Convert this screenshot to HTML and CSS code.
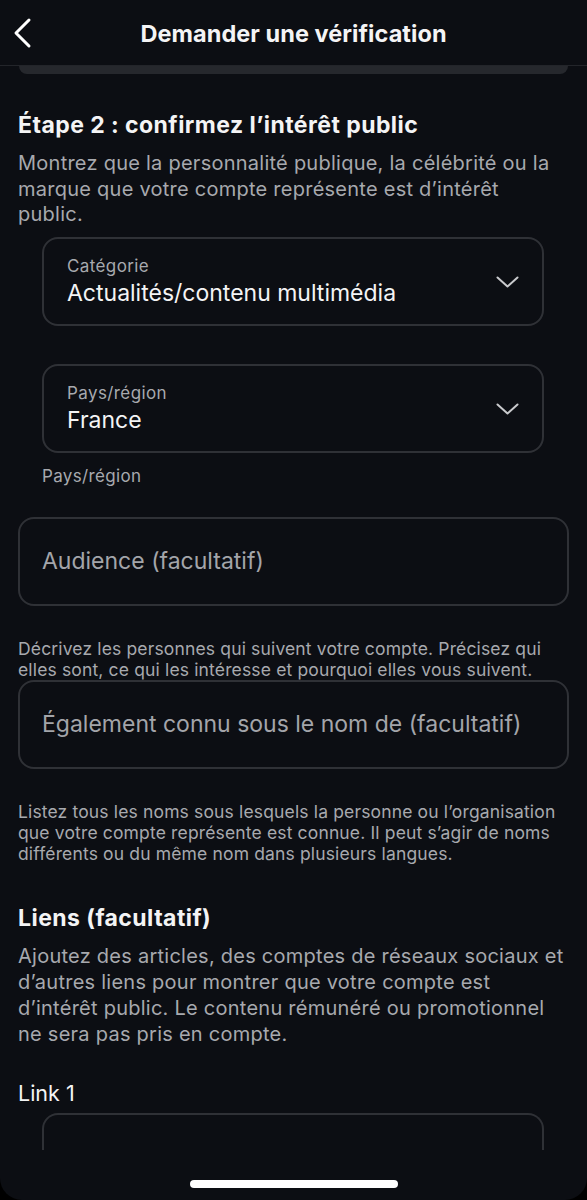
FILE: index.html
```html
<!DOCTYPE html>
<html lang="fr">
<head>
  <meta charset="UTF-8" />
  <title>Demander une vérification</title>
  <link rel="stylesheet" href="styles.css">
</head>
<body>
  <div class="screen">
    <header class="topbar">
      <svg class="back" width="20" height="32" viewBox="0 0 20 32">
        <path d="M17 3 L4 16 L17 29" fill="none" stroke="#fff" stroke-width="3" stroke-linecap="round" stroke-linejoin="round"/>
      </svg>
      <h1>Demander une vérification</h1>
    </header>
    <div class="card-tail"></div>

    <main class="content">
      <h2 class="step-title">Étape 2 : confirmez l’intérêt public</h2>
      <p class="lead">Montrez que la personnalité publique, la célébrité ou la<br>marque que votre compte représente est d’intérêt<br>public.</p>

      <div class="select-box first">
        <div class="select-text">
          <span class="select-label">Catégorie</span>
          <span class="select-value">Actualités/contenu multimédia</span>
        </div>
        <svg class="chevron" width="23" height="12" viewBox="0 0 23 12">
          <path d="M1.5 1.5 L11.5 10.5 L21.5 1.5" fill="none" stroke="#c9cacd" stroke-width="2" stroke-linecap="round" stroke-linejoin="round"/>
        </svg>
      </div>

      <div class="select-box">
        <div class="select-text">
          <span class="select-label">Pays/région</span>
          <span class="select-value">France</span>
        </div>
        <svg class="chevron" width="23" height="12" viewBox="0 0 23 12">
          <path d="M1.5 1.5 L11.5 10.5 L21.5 1.5" fill="none" stroke="#c9cacd" stroke-width="2" stroke-linecap="round" stroke-linejoin="round"/>
        </svg>
      </div>
      <p class="under-label">Pays/région</p>

      <div class="text-box audience">Audience (facultatif)</div>
      <p class="hint hint-audience">Décrivez les personnes qui suivent votre compte. Précisez qui<br>elles sont, ce qui les intéresse et pourquoi elles vous suivent.</p>

      <div class="text-box">Également connu sous le nom de (facultatif)</div>
      <p class="hint hint-alias">Listez tous les noms sous lesquels la personne ou l’organisation<br>que votre compte représente est connue. Il peut s’agir de noms<br>différents ou du même nom dans plusieurs langues.</p>

      <h2 class="step-title links-title">Liens (facultatif)</h2>
      <p class="lead links-lead">Ajoutez des articles, des comptes de réseaux sociaux et<br>d’autres liens pour montrer que votre compte est<br>d’intérêt public. Le contenu rémunéré ou promotionnel<br>ne sera pas pris en compte.</p>

      <p class="link-label">Link 1</p>
      <div class="link-box"></div>
    </main>

    <div class="home-bar"></div>
  </div>
</body>
</html>
```

FILE: styles.css
```css
html, body {
  margin: 0;
  background: #000;
}
body {
  font-family: Inter, "Noto Sans", sans-serif;
  color: #f4f4f5;
}
.screen {
  position: relative;
  width: 587px;
  height: 1200px;
  background: #0c0e13;
  border-radius: 0 0 22px 22px;
  overflow: hidden;
}
.topbar {
  height: 66px;
  display: flex;
  align-items: center;
  justify-content: center;
  border-bottom: 1px solid #23252a;
  box-sizing: border-box;
  position: relative;
}
.topbar h1 {
  margin: 1px 0 0;
  font-size: 23.5px;
  font-weight: 700;
  letter-spacing: 0.05px;
}
.back {
  position: absolute;
  left: 12px;
  top: 17px;
}
.card-tail {
  height: 8px;
  margin: 0 19px;
  background: #26282d;
  border-radius: 0 0 10px 10px;
}
.content {
  padding: 0 18px;
  white-space: nowrap;
}
.step-title {
  margin: 37px 0 0;
  font-size: 23px;
  line-height: 28px;
  font-weight: 700;
  letter-spacing: 0.45px;
}
.lead {
  margin: 12px 0 0;
  font-size: 20px;
  line-height: 25.5px;
  letter-spacing: 0.25px;
  color: #a7a9ae;
}
.select-box {
  margin: 38px 25px 0 24px;
  height: 89px;
  box-sizing: border-box;
  border: 2px solid #2f3136;
  border-radius: 16px;
  display: flex;
  align-items: center;
  padding: 0 23px;
}
.select-box.first {
  margin-top: 9.5px;
}
.select-text {
  flex: 1;
  display: flex;
  flex-direction: column;
  gap: 3px;
}
.select-label {
  font-size: 17px;
  line-height: 20px;
  letter-spacing: 0.4px;
  color: #a7a9ae;
}
.select-value {
  font-size: 23px;
  line-height: 28px;
  color: #f4f4f5;
}
.under-label {
  margin: 12.5px 0 0 24px;
  font-size: 17px;
  line-height: 20px;
  letter-spacing: 0.35px;
  color: #a7a9ae;
}
.text-box {
  height: 89px;
  box-sizing: border-box;
  border: 2px solid #2f3136;
  border-radius: 16px;
  display: flex;
  align-items: center;
  padding: 0 22px;
  font-size: 23px;
  color: #a3a5aa;
}
.text-box.audience {
  margin-top: 31px;
}
.hint {
  font-size: 17.5px;
  line-height: 21px;
  letter-spacing: 0.15px;
  color: #a7a9ae;
}
.hint-audience {
  margin: 32px 0 0;
}
.hint-alias {
  margin: 32px 0 0;
}
.links-title {
  margin-top: 40px;
}
.links-lead {
  margin-top: 11px;
  line-height: 26.3px;
}
.link-label {
  margin: 32px 0 0;
  font-size: 21.5px;
  line-height: 26px;
}
.link-box {
  margin: 7px 25px 0 24px;
  height: 35px;
  border: 2px solid #2f3136;
  border-bottom: none;
  border-radius: 16px 16px 0 0;
}
.home-bar {
  position: absolute;
  left: 190px;
  bottom: 12px;
  width: 208px;
  height: 8px;
  border-radius: 4px;
  background: #fff;
}
```
